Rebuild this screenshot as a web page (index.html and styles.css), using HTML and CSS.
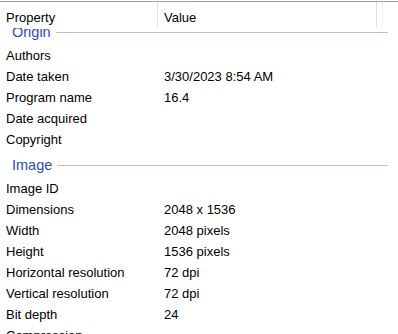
FILE: index.html
```html
<!DOCTYPE html>
<html>
<head>
<meta charset="utf-8">
<link rel="stylesheet" href="styles.css">
</head>
<body>
<div class="view">
  <div class="header">
    <div class="hcell name">Property</div>
    <div class="hcell value">Value</div>
    <div class="hcell rest"></div>
  </div>
  <div class="list">
    <div class="group"><span class="glabel">Origin</span><span class="gline"></span></div>
    <div class="row"><span>Authors</span><span></span></div>
    <div class="row"><span>Date taken</span><span>3/30/2023 8:54 AM</span></div>
    <div class="row"><span>Program name</span><span>16.4</span></div>
    <div class="row"><span>Date acquired</span><span></span></div>
    <div class="row"><span>Copyright</span><span></span></div>
    <div class="group"><span class="glabel">Image</span><span class="gline"></span></div>
    <div class="row"><span>Image ID</span><span></span></div>
    <div class="row"><span>Dimensions</span><span>2048 x 1536</span></div>
    <div class="row"><span>Width</span><span>2048 pixels</span></div>
    <div class="row"><span>Height</span><span>1536 pixels</span></div>
    <div class="row"><span>Horizontal resolution</span><span>72 dpi</span></div>
    <div class="row"><span>Vertical resolution</span><span>72 dpi</span></div>
    <div class="row"><span>Bit depth</span><span>24</span></div>
    <div class="row"><span>Compression</span><span></span></div>
  </div>
</div>
</body>
</html>
```
FILE: styles.css
```css
html, body {
  margin: 0;
  padding: 0;
  background: #fff;
  overflow: hidden;
}
body {
  width: 398px;
  height: 334px;
  font-family: "Liberation Sans", Arial, sans-serif;
  font-size: 13px;
  color: #000;
}
.view {
  padding-top: 1px;
  height: 333px;
  overflow: hidden;
}
.header {
  position: relative;
  z-index: 1;
  display: flex;
  height: 26px;
  border-top: 1px solid #a0a0a0;
  background: #fff;
}
.hcell {
  box-sizing: border-box;
  padding-left: 6px;
  padding-top: 8px;
  line-height: 15px;
  height: 25px;
  border-right: 1px solid #e3e3e3;
}
.hcell.name { width: 158px; }
.hcell.value { width: 219px; }
.hcell.rest { width: 6px; border-right-color: #f1f1f1; padding: 0; }
.list {
  margin-top: -10px;
}
.group {
  display: flex;
  align-items: center;
  height: 28px;
  padding-left: 12px;
  padding-right: 10px;
}
.glabel {
  font-size: 14.5px;
  line-height: 28px;
  color: #2f4cb2;
}
.gline {
  flex: 1;
  height: 1px;
  margin-left: 5px;
  background: #b3c0de;
}
.row {
  display: grid;
  grid-template-columns: 158px 1fr;
  height: 21px;
  line-height: 20px;
  white-space: nowrap;
}
.row span {
  padding-left: 6px;
}
```
